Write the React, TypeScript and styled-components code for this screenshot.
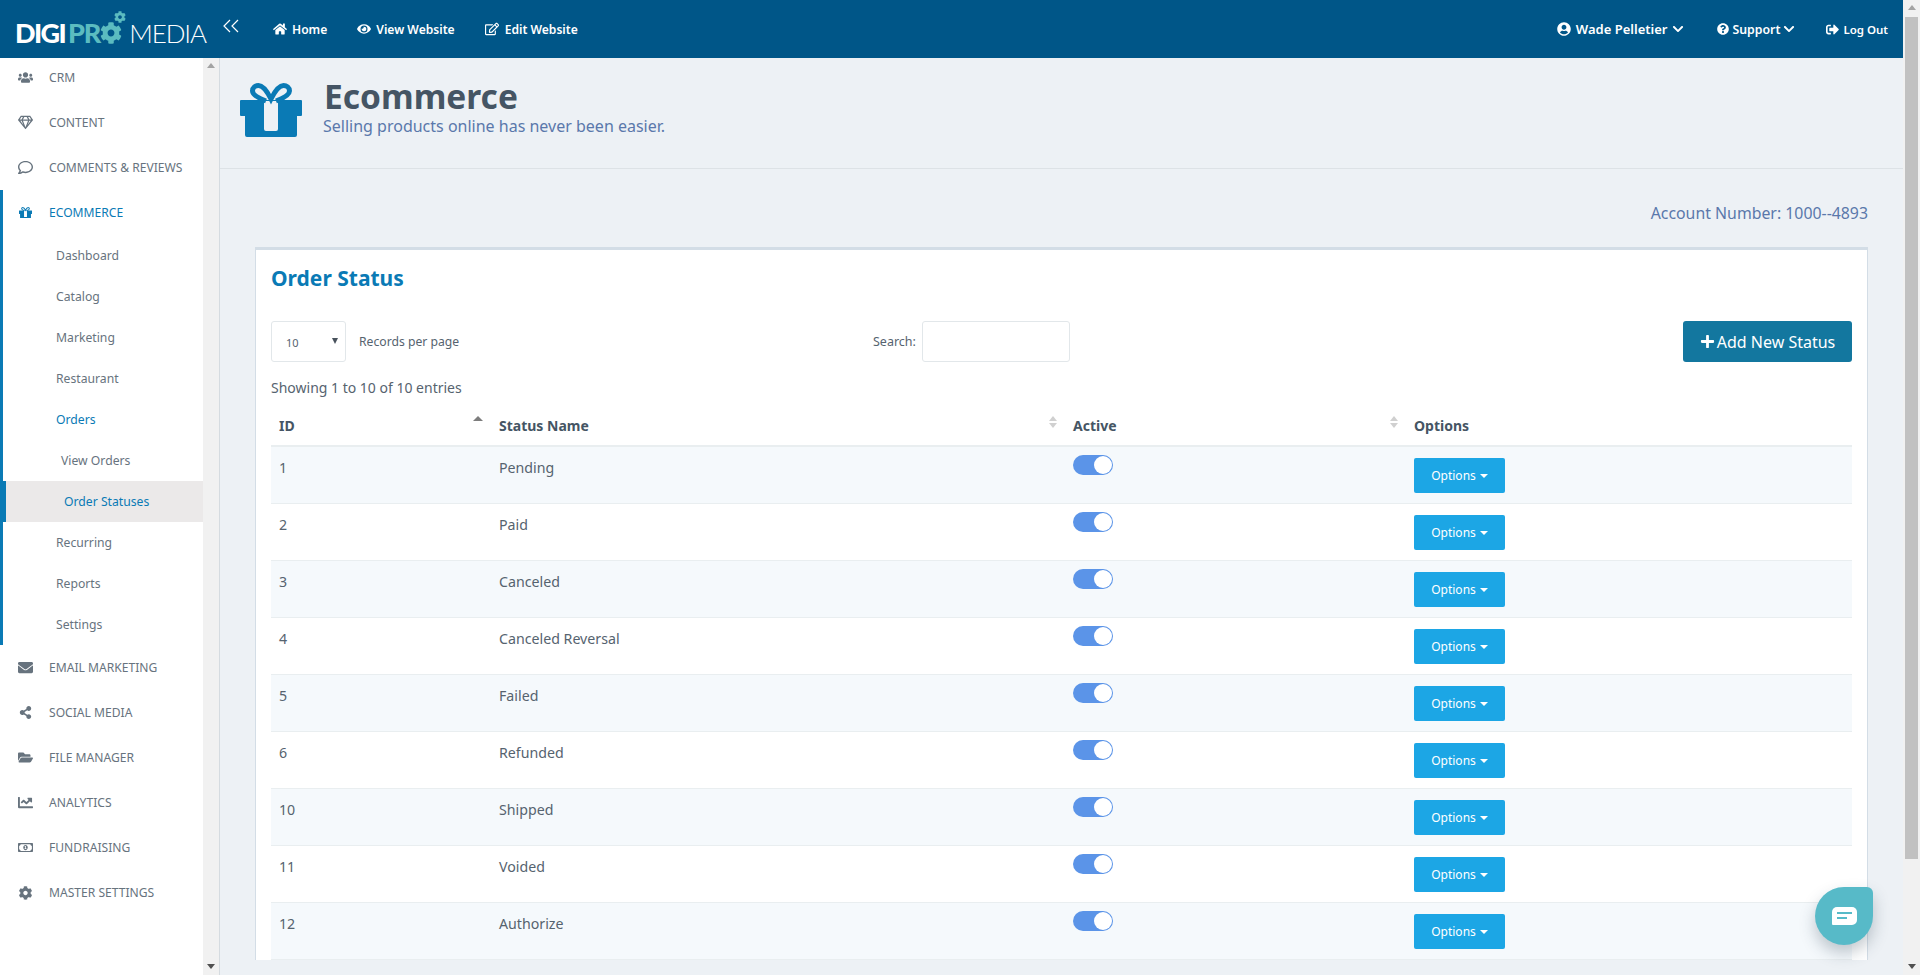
import React from "react";
import styled, { createGlobalStyle } from "styled-components";
import {
  FaUsers, FaRegGem, FaRegComment, FaEnvelope, FaShareAlt, FaFolderOpen, FaChartLine,
  FaRegMoneyBillAlt, FaCog, FaHome, FaEye, FaRegEdit, FaUserCircle, FaQuestionCircle,
  FaSignOutAlt, FaChevronDown, FaPlus,
} from "react-icons/fa";

const FONT = `"Noto Sans", "Lato", sans-serif`;
const BLUE = "#0a7ab5";

const Global = createGlobalStyle`
  html, body { margin: 0; padding: 0; height: 100%; overflow: hidden; }
  body { font-family: ${FONT}; background: #edf1f5; color: #56636f; }
  * { box-sizing: border-box; }
`;

const Page = styled.div`display: flex; height: 975px; overflow: hidden;`;
const Main = styled.div`flex: 1; min-width: 0; display: flex; flex-direction: column;`;

const Track = styled.div<{ $w: number }>`
  width: ${(p) => p.$w}px; flex: none; background: #f1f1f1; display: flex; flex-direction: column;
  align-items: center; justify-content: space-between; padding: 5px 0 6px; position: relative;
`;
const Arrow = styled.span<{ $down?: boolean }>`
  width: 0; height: 0; border-left: 4.5px solid transparent; border-right: 4.5px solid transparent;
  ${(p) => (p.$down ? "border-top: 5px solid #505050;" : "border-bottom: 5px solid #a3a3a3;")}
`;
const Thumb = styled.div`
  position: absolute; top: 17px; left: 2px; right: 2px; height: 842px; background: #c1c1c1;
`;

const TopBar = styled.header`
  height: 58px; flex: none; background: #005688; color: #fff; display: flex; align-items: center;
  font-weight: 600;
`;
const Logo = styled.div`
  width: 222px; flex: none; padding-left: 15px; display: flex; align-items: center; height: 100%;
  font-family: "Lato", sans-serif; font-size: 27px; line-height: 1; padding-top: 7px;
`;
const LogoBold = styled.span`font-weight: 900; letter-spacing: -1.6px; margin-right: 3px;`;
const LogoPro = styled.span`font-weight: 900; color: #5bbcc0; letter-spacing: -1.2px;`;
const LogoGear = styled.span`
  color: #5bbcc0; display: inline-flex; position: relative; margin: 0 7px 0 0;
  & > svg:last-child { position: absolute; left: 14px; top: -11px; }
`;
const LogoLight = styled.span`font-weight: 300; font-size: 26px; letter-spacing: -1.1px; white-space: nowrap;`;
const Collapse = styled.div`width: 51px; flex: none; display: flex; margin-top: -6px;`;
const NavLink = styled.a<{ $after?: number; $size?: number; $gap?: number }>`
  display: inline-flex; align-items: center; gap: ${(p) => p.$gap ?? 5}px; color: #fff;
  margin-right: ${(p) => p.$after ?? 30}px; font-size: ${(p) => p.$size ?? 12.1}px;
  white-space: nowrap;
  & svg { flex: none; }
`;
const Spacer = styled.div`flex: 1;`;

const Body = styled.div`flex: 1; min-height: 0; display: flex;`;
const Sidebar = styled.aside`width: 220px; flex: none; display: flex; border-right: 1px solid #d5dbe0; overflow: hidden;`;
const NavPane = styled.nav`width: 203px; flex: none; background: #fff; overflow: hidden;`;
const NavList = styled.div`margin-top: -3px;`;
const SectionItem = styled.div<{ $active?: boolean }>`
  height: 45px; display: flex; align-items: center; font-size: 12.1px; padding-left: 18px;
  color: ${(p) => (p.$active ? BLUE : "#67737e")};
  & > svg { width: 15px; flex: none; margin-right: 16px; }
`;
const Group = styled.div`border-left: 3px solid ${BLUE};`;
const GroupHead = styled(SectionItem)`padding-left: 15px;`;
const SubItem = styled.div<{ $active?: boolean; $indent?: number; $current?: boolean }>`
  height: 41px; display: flex; align-items: center; font-size: 12.2px;
  padding-left: ${(p) => p.$indent ?? 53}px;
  color: ${(p) => (p.$active ? BLUE : "#67737e")};
  ${(p) => p.$current && `background: #ebe9e9; border-left: 3px solid ${BLUE};`}
`;

const Content = styled.main`flex: 1; min-width: 0; overflow: hidden;`;
const PageHead = styled.div`
  height: 111px; border-bottom: 1px solid #dde2e6; display: flex; align-items: flex-start;
  padding: 25px 0 0 20px;
`;
const GiftWrap = styled.span`color: ${BLUE}; display: block;`;
const HeadText = styled.div`margin-left: 22px; margin-top: -6px;`;
const HeadTitle = styled.h1`
  margin: 0; font-size: 33.5px; line-height: 38px; font-weight: 700; color: #455564;
`;
const HeadSub = styled.p`margin: 0 0 0 -1px; font-size: 16px; line-height: 22px; color: #5a78ab;`;
const AccountLine = styled.div`
  padding: 33px 35px 0 0; height: 78px; text-align: right; font-size: 15.85px; line-height: 22px; color: #5a78ab;
`;
const Card = styled.section`
  margin: 0 35px; background: #fff; border: 1px solid #d3dde6; border-top-width: 3px; border-bottom: 0;
  padding: 13px 15px 0;
`;
const CardTitle = styled.h2`margin: 0; font-size: 21px; line-height: 30px; font-weight: 700; color: ${BLUE};`;
const Toolbar = styled.div`
  margin-top: 28px; display: grid; grid-template-columns: 602px 1fr auto; height: 41px; align-items: stretch;
`;
const PerPage = styled.div`display: flex; align-items: center; gap: 13px; font-size: 12.2px;`;
const SelectBox = styled.div`
  width: 75px; height: 41px; border: 1px solid #e2e7ea; border-radius: 3px; padding: 2px 7px 0 14px;
  display: flex; align-items: center; justify-content: space-between; font-size: 11px; color: #56636f;
`;
const SelectCaret = styled.span`
  width: 0; height: 0; border-left: 3.5px solid transparent; border-right: 3.5px solid transparent;
  border-top: 6px solid #48525c; margin-top: -3px;
`;
const SearchGroup = styled.label`display: flex; align-items: center; gap: 6px; font-size: 12.5px;`;
const SearchInput = styled.input`
  width: 148px; height: 41px; border: 1px solid #e2e7ea; border-radius: 3px; background: #fff; outline: none;
`;
const AddButton = styled.button`
  width: 169px; height: 41px; border: 0; border-radius: 3px; background: #13779f; color: #fff; font-family: ${FONT};
  font-size: 16px; display: flex; align-items: center; justify-content: center; gap: 2px; padding: 0;
`;
const Showing = styled.div`margin-top: 16px; font-size: 14px; line-height: 20px;`;

const Table = styled.table`width: 100%; table-layout: fixed; border-collapse: separate; border-spacing: 0;`;
const Th = styled.th<{ $w?: number }>`
  ${(p) => p.$w && `width: ${p.$w}px;`} height: 49px; padding: 0 8px 9px; vertical-align: bottom; text-align: left;
  font-size: 14px; line-height: 20px; font-weight: 700; color: #455564; border-bottom: 2px solid #e9eef0;
`;
const ThInner = styled.div`display: flex; justify-content: space-between; align-items: flex-start;`;
const SortIcon = styled.span`display: inline-flex; flex-direction: column; gap: 2px;`;
const SortUp = styled.span<{ $on?: boolean }>`
  width: 0; height: 0; border-left: 5px solid transparent; border-right: 5px solid transparent;
  border-bottom: 5px solid ${(p) => (p.$on ? "#7d7d7d" : "#d0d0d0")};
`;
const SortUpSmall = styled(SortUp)`border-left-width: 4px; border-right-width: 4px;`;
const SortDown = styled.span`
  width: 0; height: 0; border-left: 4px solid transparent; border-right: 4px solid transparent;
  border-top: 5px solid #d0d0d0;
`;
const Tr = styled.tr<{ $odd: boolean }>`background: ${(p) => (p.$odd ? "#f5f9fc" : "#fff")};`;
const Td = styled.td<{ $pad?: number }>`
  height: 57px; padding: ${(p) => p.$pad ?? 11}px 8px 0; vertical-align: top; font-size: 14.2px; line-height: 20px;
  color: #56636f; border-bottom: 1px solid #e9eef0;
`;
const Toggle = styled.span`
  display: block; width: 40px; height: 20px; border-radius: 10px; background: #5b94e8; position: relative;
  &::after {
    content: ""; position: absolute; right: 1px; top: 1px; width: 18px; height: 18px; border-radius: 50%; background: #fff;
  }
`;
const OptionsBtn = styled.button`
  width: 91px; height: 35px; border: 0; border-radius: 2px; background: #1ca6e5; color: #fff; font-family: ${FONT};
  font-size: 12px; display: flex; align-items: center; justify-content: center; gap: 4px; padding: 0;
`;
const BtnCaret = styled.span`
  width: 0; height: 0; border-left: 4px solid transparent; border-right: 4px solid transparent; border-top: 4px solid #fff;
`;
const Chat = styled.div`
  position: fixed; left: 1815px; top: 887px; width: 58px; height: 58px; background: #57bac8;
  border-radius: 50% 6px 50% 50%; box-shadow: 0 8px 16px rgba(40, 60, 80, 0.28);
  display: flex; align-items: center; justify-content: center;
`;

const Gift = ({ size }: { size: number }) => (
  <svg width={size} height={(size * 54) / 62} viewBox="0 0 62 54" fill="currentColor" aria-hidden="true">
    <path
      fillRule="evenodd"
      d="M1 17h60a1 1 0 0 1 1 1v14a1 1 0 0 1-1 1h-4v19a2 2 0 0 1-2 2H7a2 2 0 0 1-2-2V33H1a1 1 0 0 1-1-1V18a1 1 0 0 1 1-1zM24 18v28a2 2 0 0 0 2 2h10a2 2 0 0 0 2-2V18z"
    />
    <path
      d="M26 18C18 15 12.500 12 12.500 8C12.500 4.500 15.500 2.500 18.500 2.500C23 2.500 27 8 31 16C35 8 39 2.500 43.500 2.500C46.500 2.500 49.500 4.500 49.500 8C49.500 12 44 15 36 18"
      fill="none" stroke="currentColor" strokeWidth="5"
    />
  </svg>
);

const sections1 = [
  { label: "CRM", icon: <FaUsers size={15} /> },
  { label: "CONTENT", icon: <FaRegGem size={15} /> },
  { label: "COMMENTS & REVIEWS", icon: <FaRegComment size={15} /> },
];
const sections2 = [
  { label: "EMAIL MARKETING", icon: <FaEnvelope size={15} /> },
  { label: "SOCIAL MEDIA", icon: <FaShareAlt size={13} /> },
  { label: "FILE MANAGER", icon: <FaFolderOpen size={15} /> },
  { label: "ANALYTICS", icon: <FaChartLine size={15} /> },
  { label: "FUNDRAISING", icon: <FaRegMoneyBillAlt size={15} /> },
  { label: "MASTER SETTINGS", icon: <FaCog size={14} /> },
];
const rows: [string, string][] = [
  ["1", "Pending"], ["2", "Paid"], ["3", "Canceled"], ["4", "Canceled Reversal"], ["5", "Failed"],
  ["6", "Refunded"], ["10", "Shipped"], ["11", "Voided"], ["12", "Authorize"],
];

export default function App() {
  return (
    <Page>
      <Global />
      <Main>
        <TopBar>
          <Logo>
            <LogoBold>DIGI</LogoBold>
            <LogoPro>PR</LogoPro>
            <LogoGear>
              <FaCog size={22} />
              <FaCog size={12} />
            </LogoGear>
            <LogoLight>MEDIA</LogoLight>
          </Logo>
          <Collapse>
            <svg width="18" height="14" viewBox="0 0 18 14" fill="none" stroke="#fff" strokeWidth="1.200">
              <path d="M8 1L2 7l6 6M16 1l-6 6 6 6" />
            </svg>
          </Collapse>
          <NavLink><FaHome size={14} />Home</NavLink>
          <NavLink><FaEye size={14} />View Website</NavLink>
          <NavLink $gap={6}><FaRegEdit size={14} />Edit Website</NavLink>
          <Spacer />
          <NavLink $after={33} $size={13}><FaUserCircle size={14} />Wade Pelletier<FaChevronDown size={12} /></NavLink>
          <NavLink $after={31} $size={12.3} $gap={3}><FaQuestionCircle size={12} />Support<FaChevronDown size={12} /></NavLink>
          <NavLink $after={15} $size={11.5} $gap={4}><FaSignOutAlt size={13} />Log Out</NavLink>
        </TopBar>
        <Body>
          <Sidebar>
            <NavPane>
              <NavList>
                {sections1.map((s) => (
                  <SectionItem key={s.label}>{s.icon}{s.label}</SectionItem>
                ))}
                <Group>
                  <GroupHead $active><Gift size={13} />ECOMMERCE</GroupHead>
                  <SubItem>Dashboard</SubItem>
                  <SubItem>Catalog</SubItem>
                  <SubItem>Marketing</SubItem>
                  <SubItem>Restaurant</SubItem>
                  <SubItem $active>Orders</SubItem>
                  <SubItem $indent={58}>View Orders</SubItem>
                  <SubItem $active $current $indent={58}>Order Statuses</SubItem>
                  <SubItem>Recurring</SubItem>
                  <SubItem>Reports</SubItem>
                  <SubItem>Settings</SubItem>
                </Group>
                {sections2.map((s) => (
                  <SectionItem key={s.label}>{s.icon}{s.label}</SectionItem>
                ))}
              </NavList>
            </NavPane>
            <Track $w={16}>
              <Arrow />
              <Arrow $down />
            </Track>
          </Sidebar>
          <Content>
            <PageHead>
              <GiftWrap><Gift size={62} /></GiftWrap>
              <HeadText>
                <HeadTitle>Ecommerce</HeadTitle>
                <HeadSub>Selling products online has never been easier.</HeadSub>
              </HeadText>
            </PageHead>
            <AccountLine>Account Number: 1000--4893</AccountLine>
            <Card>
              <CardTitle>Order Status</CardTitle>
              <Toolbar>
                <PerPage>
                  <SelectBox>10<SelectCaret /></SelectBox>
                  Records per page
                </PerPage>
                <SearchGroup>
                  Search:
                  <SearchInput />
                </SearchGroup>
                <AddButton><FaPlus size={15} />Add New Status</AddButton>
              </Toolbar>
              <Showing>Showing 1 to 10 of 10 entries</Showing>
              <Table>
                <thead>
                  <tr>
                    <Th $w={220}><ThInner>ID<SortIcon><SortUp $on /></SortIcon></ThInner></Th>
                    <Th $w={574}><ThInner>Status Name<SortIcon><SortUpSmall /><SortDown /></SortIcon></ThInner></Th>
                    <Th $w={341}><ThInner>Active<SortIcon><SortUpSmall /><SortDown /></SortIcon></ThInner></Th>
                    <Th>Options</Th>
                  </tr>
                </thead>
                <tbody>
                  {rows.map(([id, name], i) => (
                    <Tr key={id} $odd={i % 2 === 0}>
                      <Td>{id}</Td>
                      <Td>{name}</Td>
                      <Td $pad={8}><Toggle /></Td>
                      <Td><OptionsBtn>Options<BtnCaret /></OptionsBtn></Td>
                    </Tr>
                  ))}
                </tbody>
              </Table>
            </Card>
          </Content>
        </Body>
      </Main>
      <Track $w={17}>
        <Arrow />
        <Thumb />
        <Arrow $down />
      </Track>
      <Chat>
        <svg width="25" height="18" viewBox="0 0 25 18" aria-hidden="true">
          <path d="M5 0h15a5 5 0 0 1 5 5v8a5 5 0 0 1-5 5H1a1 1 0 0 1-1-1V5a5 5 0 0 1 5-5z" fill="#fff" />
          <path d="M5 6h15M5 11h10" stroke="#57bac8" strokeWidth="2" />
        </svg>
      </Chat>
    </Page>
  );
}
